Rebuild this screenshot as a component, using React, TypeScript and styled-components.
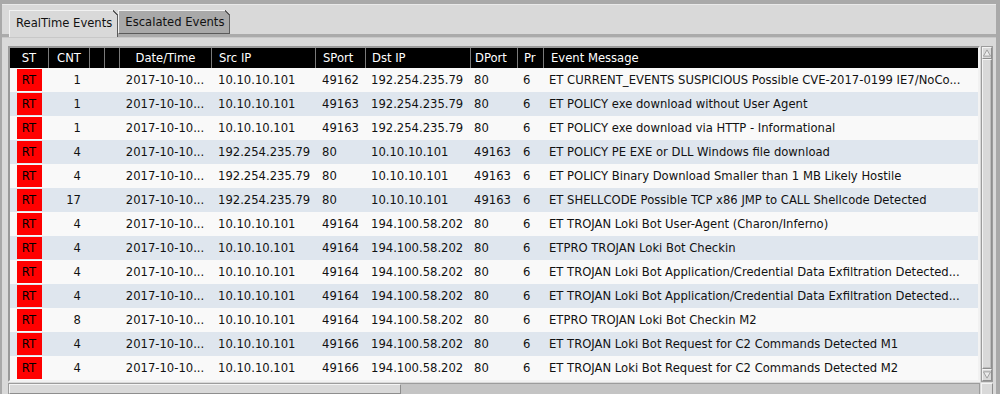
import React from 'react';
import styled, { createGlobalStyle } from 'styled-components';

const GlobalStyle = createGlobalStyle`
  html, body {
    margin: 0;
    padding: 0;
    background: #a9a9a9;
  }
  body {
    font-family: 'DejaVu Sans', 'Liberation Sans', sans-serif;
    font-size: 11.6px;
    color: #000;
  }
`;

const COLS = '38px 41px 15px 15px 92px 104px 50px 105px 47px 26px 435px';

type Align = 'left' | 'center' | 'right';

type Column = { title: string; align: Align; pad: number };

const columns: Column[] = [
  { title: 'ST', align: 'center', pad: 0 },
  { title: 'CNT', align: 'center', pad: 0 },
  { title: '', align: 'left', pad: 0 },
  { title: '', align: 'left', pad: 0 },
  { title: 'Date/Time', align: 'center', pad: 0 },
  { title: 'Src IP', align: 'left', pad: 7 },
  { title: 'SPort', align: 'left', pad: 7 },
  { title: 'Dst IP', align: 'left', pad: 6 },
  { title: 'DPort', align: 'left', pad: 4 },
  { title: 'Pr', align: 'left', pad: 6 },
  { title: 'Event Message', align: 'left', pad: 7 },
];

type EventRow = {
  cnt: number;
  src: string;
  sport: string;
  dst: string;
  dport: string;
  msg: string;
};

const events: EventRow[] = [
  { cnt: 1, src: '10.10.10.101', sport: '49162', dst: '192.254.235.79', dport: '80', msg: 'ET CURRENT_EVENTS SUSPICIOUS Possible CVE-2017-0199 IE7/NoCo...' },
  { cnt: 1, src: '10.10.10.101', sport: '49163', dst: '192.254.235.79', dport: '80', msg: 'ET POLICY exe download without User Agent' },
  { cnt: 1, src: '10.10.10.101', sport: '49163', dst: '192.254.235.79', dport: '80', msg: 'ET POLICY exe download via HTTP - Informational' },
  { cnt: 4, src: '192.254.235.79', sport: '80', dst: '10.10.10.101', dport: '49163', msg: 'ET POLICY PE EXE or DLL Windows file download' },
  { cnt: 4, src: '192.254.235.79', sport: '80', dst: '10.10.10.101', dport: '49163', msg: 'ET POLICY Binary Download Smaller than 1 MB Likely Hostile' },
  { cnt: 17, src: '192.254.235.79', sport: '80', dst: '10.10.10.101', dport: '49163', msg: 'ET SHELLCODE Possible TCP x86 JMP to CALL Shellcode Detected' },
  { cnt: 4, src: '10.10.10.101', sport: '49164', dst: '194.100.58.202', dport: '80', msg: 'ET TROJAN Loki Bot User-Agent (Charon/Inferno)' },
  { cnt: 4, src: '10.10.10.101', sport: '49164', dst: '194.100.58.202', dport: '80', msg: 'ETPRO TROJAN Loki Bot Checkin' },
  { cnt: 4, src: '10.10.10.101', sport: '49164', dst: '194.100.58.202', dport: '80', msg: 'ET TROJAN Loki Bot Application/Credential Data Exfiltration Detected...' },
  { cnt: 4, src: '10.10.10.101', sport: '49164', dst: '194.100.58.202', dport: '80', msg: 'ET TROJAN Loki Bot Application/Credential Data Exfiltration Detected...' },
  { cnt: 8, src: '10.10.10.101', sport: '49164', dst: '194.100.58.202', dport: '80', msg: 'ETPRO TROJAN Loki Bot Checkin M2' },
  { cnt: 4, src: '10.10.10.101', sport: '49166', dst: '194.100.58.202', dport: '80', msg: 'ET TROJAN Loki Bot Request for C2 Commands Detected M1' },
  { cnt: 4, src: '10.10.10.101', sport: '49166', dst: '194.100.58.202', dport: '80', msg: 'ET TROJAN Loki Bot Request for C2 Commands Detected M2' },
];

const Window = styled.div`
  width: 1000px;
  height: 394px;
  overflow: hidden;
  box-sizing: border-box;
  padding: 4px 4px 0 2px;
  background: #a9a9a9;
`;

const Frame = styled.div`
  background: #d9d9d9;
  height: 100%;
`;

const TabBar = styled.div`
  height: 29px;
  display: flex;
  align-items: flex-end;
  padding-left: 7px;
  border-top: 1px solid #e9e9e9;
  border-bottom: 3px solid #ababab;
`;

// the active tab sinks into the panel below, covering the separator
const Tab = styled.div<{ $active?: boolean }>`
  position: relative;
  height: ${({ $active }) => ($active ? '27px' : '24px')};
  margin-bottom: ${({ $active }) => ($active ? '-3px' : '0')};
  box-sizing: border-box;
  padding: 0 5px 0 6px;
  display: flex;
  align-items: ${({ $active }) => ($active ? 'flex-start' : 'center')};
  padding-top: ${({ $active }) => ($active ? '5px' : '0')};
  background: ${({ $active }) => ($active ? '#d9d9d9' : '#a9a9a9')};
  border-top: 1px solid #f2f2f2;
  border-left: 1px solid #f2f2f2;
  border-right: 1px solid #5a5a5a;
  border-bottom: ${({ $active }) => ($active ? 'none' : '1px solid #5a5a5a')};
  color: #111;
  white-space: nowrap;

  &::after {
    content: '';
    position: absolute;
    top: -1px;
    right: -1px;
    width: 5px;
    height: 5px;
    background: linear-gradient(to bottom left, #d9d9d9 0 45%, #5a5a5a 45% 65%, transparent 65%);
  }
`;

const Body = styled.div`
  border-top: 1px solid #c8c8c8;
  padding: 8px 3px 0 6px;
  display: grid;
  grid-template-columns: 972px 12px;
  grid-template-rows: 336px 12px;
  column-gap: 1px;
  row-gap: 1px;
`;

const Table = styled.div`
  border: 2px solid;
  border-color: #9a9a9a #f2f2f2 #f2f2f2 #9a9a9a;
  background: #f9f9f9;
  overflow: hidden;
`;

const HeaderRow = styled.div`
  display: grid;
  grid-template-columns: ${COLS};
  height: 20px;
  background: #000;
`;

const HeaderCell = styled.div<{ $align: Align; $pad: number }>`
  display: flex;
  align-items: center;
  justify-content: ${({ $align }) => ($align === 'center' ? 'center' : $align === 'right' ? 'flex-end' : 'flex-start')};
  padding-left: ${({ $pad }) => $pad}px;
  color: #fff;
  white-space: nowrap;
  overflow: hidden;
  & + & {
    border-left: 1px solid #7a7a7a;
  }
`;

const Row = styled.div<{ $alt: boolean }>`
  display: grid;
  grid-template-columns: ${COLS};
  height: 24px;
  background: ${({ $alt }) => ($alt ? '#dfe6ee' : '#f9f9f9')};
`;

const Cell = styled.div<{ $align: Align; $pad: number }>`
  display: flex;
  align-items: center;
  justify-content: ${({ $align }) => ($align === 'center' ? 'center' : $align === 'right' ? 'flex-end' : 'flex-start')};
  padding-left: ${({ $pad }) => $pad}px;
  padding-right: ${({ $align }) => ($align === 'right' ? '8px' : '0')};
  white-space: nowrap;
  overflow: hidden;
  color: #111;
`;

const Badge = styled.div`
  width: 25px;
  height: 22px;
  background: #ff0000;
  color: #000;
  display: flex;
  align-items: center;
  justify-content: center;
`;

const VScroll = styled.div`
  display: flex;
  flex-direction: column;
  background: #c4c4c4;
  border: 1px solid #9c9c9c;
`;

const ArrowButton = styled.div`
  height: 12px;
  flex: none;
  display: flex;
  align-items: center;
  justify-content: center;
  background: #d9d9d9;
  border: 1px solid;
  border-color: #f4f4f4 #8e8e8e #8e8e8e #f4f4f4;
  box-sizing: border-box;
`;

const Thumb = styled.div`
  flex: 1;
  background: #d9d9d9;
  border: 1px solid;
  border-color: #f4f4f4 #8e8e8e #8e8e8e #f4f4f4;
  box-shadow: inset -1px -1px 0 #bdbdbd;
`;

const HScroll = styled.div`
  display: flex;
  background: #c4c4c4;
  border: 1px solid #9c9c9c;
`;

const HThumb = styled.div`
  width: 390px;
  background: #d9d9d9;
  border: 1px solid;
  border-color: #f4f4f4 #8e8e8e #8e8e8e #f4f4f4;
`;

const Corner = styled.div`
  background: #d9d9d9;
  border: 1px solid;
  border-color: #f4f4f4 #8e8e8e #8e8e8e #f4f4f4;
`;

const Arrow = ({ up }: { up: boolean }) => (
  <svg width="9" height="8" viewBox="0 0 9 8">
    <polygon
      points={up ? '4.5,0.5 8.5,7.5 0.5,7.5' : '0.5,0.5 8.5,0.5 4.5,7.5'}
      fill="#ececec"
      stroke="#9a9a9a"
      strokeWidth="1"
    />
  </svg>
);

const App = () => {
  return (
    <Window>
      <GlobalStyle />
      <Frame>
        <TabBar>
          <Tab $active>RealTime Events</Tab>
          <Tab>Escalated Events</Tab>
        </TabBar>
        <Body>
          <Table>
            <HeaderRow>
              {columns.map((c, i) => (
                <HeaderCell key={i} $align={c.align} $pad={c.pad}>
                  {c.title}
                </HeaderCell>
              ))}
            </HeaderRow>
            {events.map((e, i) => (
              <Row key={i} $alt={i % 2 === 1}>
                <Cell $align="center" $pad={0}>
                  <Badge>RT</Badge>
                </Cell>
                <Cell $align="right" $pad={0}>{e.cnt}</Cell>
                <Cell $align="left" $pad={0} />
                <Cell $align="left" $pad={0} />
                <Cell $align="center" $pad={0}>2017-10-10...</Cell>
                <Cell $align="left" $pad={7}>{e.src}</Cell>
                <Cell $align="left" $pad={7}>{e.sport}</Cell>
                <Cell $align="left" $pad={6}>{e.dst}</Cell>
                <Cell $align="left" $pad={4}>{e.dport}</Cell>
                <Cell $align="left" $pad={6}>6</Cell>
                <Cell $align="left" $pad={6}>{e.msg}</Cell>
              </Row>
            ))}
          </Table>
          <VScroll>
            <ArrowButton>
              <Arrow up />
            </ArrowButton>
            <Thumb />
            <ArrowButton>
              <Arrow up={false} />
            </ArrowButton>
          </VScroll>
          <HScroll>
            <HThumb />
          </HScroll>
          <Corner />
        </Body>
      </Frame>
    </Window>
  );
};

export default App;
